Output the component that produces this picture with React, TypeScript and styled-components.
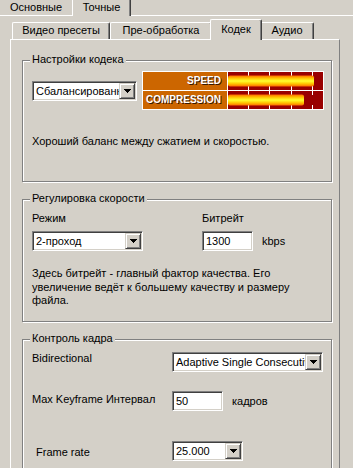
import React from "react";
import styled, { createGlobalStyle } from "styled-components";

const Global = createGlobalStyle`
  html, body { margin: 0; padding: 0; background: #D4D0C8; overflow: hidden; }
  body { font-family: "Liberation Sans", Arial, sans-serif; font-size: 11px; color: #000; line-height: 13px; }
`;

const Page = styled.div`
  width: 353px;
  height: 468px;
  overflow: hidden;
`;

const OuterTabStrip = styled.div`
  display: flex;
  align-items: flex-end;
  height: 15px;
  margin-left: -2px;
`;

const OuterTab = styled.div<{ $w: number; $sel?: boolean }>`
  box-sizing: border-box;
  position: relative;
  z-index: ${(p) => (p.$sel ? 2 : 1)};
  width: ${(p) => p.$w}px;
  height: ${(p) => (p.$sel ? 20 : 17)}px;
  margin: ${(p) => (p.$sel ? "0 -2px -1px" : "0")};
  background: #d4d0c8;
  border-top: 1px solid #fff;
  border-left: 1px solid #fff;
  border-right: 1px solid #404040;
  box-shadow: inset -1px 0 #808080;
  display: flex;
  justify-content: center;
  align-items: flex-end;
  padding-bottom: ${(p) => (p.$sel ? 2 : 1)}px;
  white-space: nowrap;
`;

const OuterPanel = styled.div`
  border-top: 1px solid #fff;
  padding: 3px 0 0 10px;
`;

const InnerTabStrip = styled.div`
  display: flex;
  align-items: flex-end;
  height: 20px;
  padding-left: 2px;
`;

const Tab = styled.div<{ $w: number; $sel?: boolean }>`
  box-sizing: border-box;
  position: relative;
  z-index: ${(p) => (p.$sel ? 2 : 1)};
  width: ${(p) => p.$w}px;
  height: ${(p) => (p.$sel ? 21 : 17)}px;
  margin: ${(p) => (p.$sel ? "0 -2px -1px" : "0")};
  background: #d4d0c8;
  border-top: 1px solid #fff;
  border-left: 1px solid #fff;
  border-right: 1px solid #404040;
  box-shadow: inset -1px 0 #808080;
  border-radius: 2px 2px 0 0;
  display: flex;
  justify-content: center;
  align-items: flex-start;
  padding-top: ${(p) => (p.$sel ? 3 : 1)}px;
  white-space: nowrap;
`;

const InnerPanel = styled.div`
  box-sizing: border-box;
  width: 330px;
  border-top: 1px solid #fff;
  border-left: 1px solid #fff;
  border-right: 1px solid #808080;
  padding: 20px 0 0 11px;
  display: flex;
  flex-direction: column;
  gap: 17px;
`;

const Group = styled.section<{ $h: number }>`
  position: relative;
  box-sizing: border-box;
  width: 310px;
  height: ${(p) => p.$h}px;
  border: 1px solid #808080;
  box-shadow: inset 1px 1px 0 #fff, 1px 1px 0 #fff;
`;

const GroupLabel = styled.span`
  position: absolute;
  top: -8px;
  left: 7px;
  padding: 0 2px;
  background: #d4d0c8;
  line-height: 13px;
  white-space: nowrap;
`;

const Body = styled.div<{ $top: number }>`
  padding: ${(p) => p.$top}px 0 0 9px;
`;

const CodecRow = styled.div`
  display: flex;
  align-items: center;
  gap: 5px;
`;

const Combo = styled.div<{ $w: number }>`
  box-sizing: border-box;
  width: ${(p) => p.$w}px;
  height: 20px;
  display: flex;
  padding: 1px;
  background: #fff;
  border: 1px solid;
  border-color: #808080 #fff #fff #808080;
  box-shadow: inset 1px 1px #404040, inset -1px -1px #d4d0c8;
  flex-shrink: 0;
`;

const ComboText = styled.div`
  flex: 1;
  min-width: 0;
  overflow: hidden;
  white-space: nowrap;
  padding-left: 2px;
  line-height: 16px;
`;

const DropButton = styled.div`
  box-sizing: border-box;
  width: 16px;
  height: 16px;
  flex-shrink: 0;
  background: #d4d0c8;
  border: 1px solid;
  border-color: #d4d0c8 #404040 #404040 #d4d0c8;
  box-shadow: inset 1px 1px #fff, inset -1px -1px #808080;
  display: flex;
  align-items: center;
  justify-content: center;
`;

const Field = styled.div<{ $w: number }>`
  box-sizing: border-box;
  width: ${(p) => p.$w}px;
  height: 20px;
  padding: 1px 1px 1px 3px;
  background: #fff;
  border: 1px solid;
  border-color: #808080 #fff #fff #808080;
  box-shadow: inset 1px 1px #404040, inset -1px -1px #d4d0c8;
  line-height: 16px;
  flex-shrink: 0;
`;

const Chart = styled.div`
  display: grid;
  grid-template-columns: 84px 95px;
  grid-auto-rows: 18px;
  gap: 1px;
  background: #fff;
  border: 1px solid #fff;
`;

const ChartLabel = styled.div`
  background: #cc6600;
  color: #fff;
  font-weight: bold;
  font-size: 10px;
  line-height: 18px;
  text-align: right;
  padding-right: 6px;
  text-shadow: 1px 1px 0 #3a1800;
  letter-spacing: 0;
`;

const Hint = styled.div<{ $top: number }>`
  margin-top: ${(p) => p.$top}px;
  white-space: nowrap;
`;

const SpeedRow = styled.div`
  display: flex;
`;

const Column = styled.div<{ $w?: number }>`
  display: flex;
  flex-direction: column;
  gap: 6px;
  width: ${(p) => (p.$w ? `${p.$w}px` : "auto")};
`;

const InlineRow = styled.div<{ $gap: number }>`
  display: flex;
  align-items: center;
  gap: ${(p) => p.$gap}px;
`;

const Desc = styled.div`
  margin-top: 16px;
  line-height: 13.5px;
  white-space: nowrap;
`;

const FormRow = styled.div<{ $top: number }>`
  display: flex;
  align-items: flex-start;
  margin-top: ${(p) => p.$top}px;
`;

const RowLabel = styled.div<{ $dy: number; $dx?: number }>`
  box-sizing: border-box;
  width: 140px;
  padding-top: ${(p) => p.$dy}px;
  padding-left: ${(p) => p.$dx ?? 0}px;
  white-space: nowrap;
`;

const Arrow = () => (
  <svg width="7" height="4" viewBox="0 0 7 4" shapeRendering="crispEdges">
    <rect x="0" y="0" width="7" height="1" fill="#000" />
    <rect x="1" y="1" width="5" height="1" fill="#000" />
    <rect x="2" y="2" width="3" height="1" fill="#000" />
    <rect x="3" y="3" width="1" height="1" fill="#000" />
  </svg>
);

const Select: React.FC<{ w: number; value: string }> = ({ w, value }) => (
  <Combo $w={w}>
    <ComboText>{value}</ComboText>
    <DropButton>
      <Arrow />
    </DropButton>
  </Combo>
);

const Bar: React.FC<{ len: number; id: string }> = ({ len, id }) => (
  <svg width="95" height="18" viewBox="0 0 95 18" style={{ display: "block" }}>
    <defs>
      <linearGradient id={id} x1="0" y1="0" x2="0" y2="1">
        <stop offset="0" stopColor="#ff6a00" />
        <stop offset="0.25" stopColor="#ffc400" />
        <stop offset="0.5" stopColor="#ffff30" />
        <stop offset="0.75" stopColor="#ffc400" />
        <stop offset="1" stopColor="#ff6a00" />
      </linearGradient>
    </defs>
    <rect x="0" y="0" width="95" height="18" fill="#990000" />
    {[20, 41, 63, 84].map((x) => (
      <g key={x} shapeRendering="crispEdges">
        <rect x={x} y="0" width="1" height="4" fill="#fff" />
        <rect x={x} y="14" width="1" height="4" fill="#fff" />
      </g>
    ))}
    <rect x="0" y="3.5" width={len} height="11" rx="2" fill={`url(#${id})`} />
  </svg>
);

export default function App() {
  return (
    <Page>
      <Global />
      <OuterTabStrip>
        <OuterTab $w={76}>Основные</OuterTab>
        <OuterTab $w={59} $sel>
          Точные
        </OuterTab>
      </OuterTabStrip>
      <OuterPanel>
        <InnerTabStrip>
          <Tab $w={98}>Видео пресеты</Tab>
          <Tab $w={102}>Пре-обработка</Tab>
          <Tab $w={52} $sel>
            Кодек
          </Tab>
          <Tab $w={54}>Аудио</Tab>
        </InnerTabStrip>
        <InnerPanel>
          <Group $h={122}>
            <GroupLabel>Настройки кодека</GroupLabel>
            <Body $top={10}>
              <CodecRow>
                <Select w={105} value="Сбалансированный" />
                <Chart>
                  <ChartLabel>SPEED</ChartLabel>
                  <Bar len={86} id="g1" />
                  <ChartLabel>COMPRESSION</ChartLabel>
                  <Bar len={76} id="g2" />
                </Chart>
              </CodecRow>
              <Hint $top={25}>Хороший баланс между сжатием и скоростью.</Hint>
            </Body>
          </Group>
          <Group $h={123}>
            <GroupLabel>Регулировка скорости</GroupLabel>
            <Body $top={12}>
              <SpeedRow>
                <Column $w={170}>
                  <div>Режим</div>
                  <Select w={111} value="2-проход" />
                </Column>
                <Column>
                  <div>Битрейт</div>
                  <InlineRow $gap={9}>
                    <Field $w={51}>1300</Field>
                    <span>kbps</span>
                  </InlineRow>
                </Column>
              </SpeedRow>
              <Desc>
                Здесь битрейт - главный фактор качества. Его
                <br />
                увеличение ведёт к большему качеству и размеру
                <br />
                файла.
              </Desc>
            </Body>
          </Group>
          <Group $h={160}>
            <GroupLabel>Контроль кадра</GroupLabel>
            <Body $top={12}>
              <FormRow $top={0}>
                <RowLabel $dy={0}>Bidirectional</RowLabel>
                <Select w={151} value="Adaptive Single Consecutive" />
              </FormRow>
              <FormRow $top={19}>
                <RowLabel $dy={2}>Max Keyframe Интервал</RowLabel>
                <InlineRow $gap={9}>
                  <Field $w={51}>50</Field>
                  <span>кадров</span>
                </InlineRow>
              </FormRow>
              <FormRow $top={30}>
                <RowLabel $dy={5} $dx={4}>
                  Frame rate
                </RowLabel>
                <Select w={71} value="25.000" />
              </FormRow>
            </Body>
          </Group>
        </InnerPanel>
      </OuterPanel>
    </Page>
  );
}
